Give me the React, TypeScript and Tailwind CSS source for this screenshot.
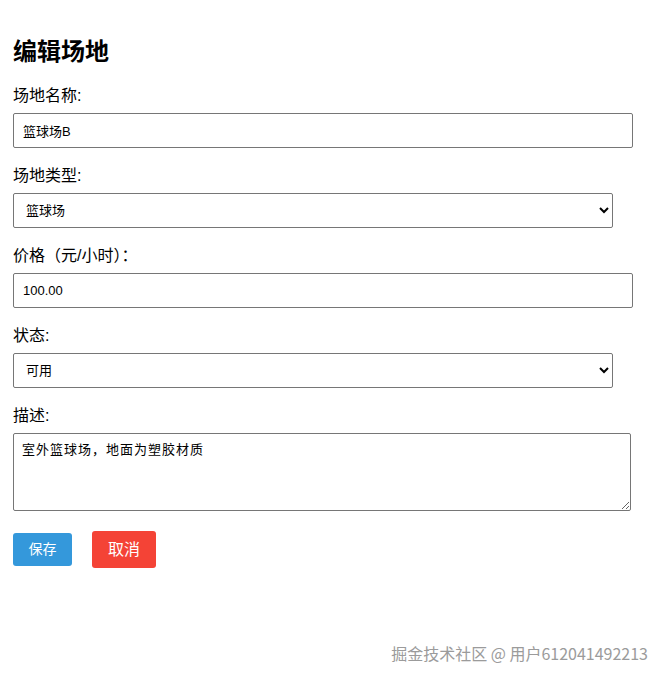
import React from 'react';

const font = { fontFamily: '"Noto Sans CJK SC", "Noto Sans", sans-serif' };

const Label = ({ children }: { children: React.ReactNode }) => (
  <label className="block h-[20px] leading-[20px] text-[16px] text-black mb-[7px]">{children}</label>
);

export default function App() {
  return (
    <div className="relative h-[680px] w-[666px] bg-white font-['Liberation_Sans','Noto_Sans_CJK_SC',sans-serif] text-black">
      <div className="pl-[13px] pt-[36px]">
        <h2 className="text-[24px] font-bold leading-[28px] mb-[22px] font-['Noto_Sans_CJK_SC',sans-serif]">编辑场地</h2>

        <div className="mb-[18px]">
          <Label>场地名称:</Label>
          <input
            defaultValue="篮球场B"
            className="block w-[620px] h-[35px] border border-[#767676] rounded-[2px] px-[9px] text-[13px] outline-none"
          />
        </div>

        <div className="mb-[18px]">
          <Label>场地类型:</Label>
          <select
            defaultValue="篮球场"
            className="block w-[600px] h-[35px] border border-[#767676] rounded-[2px] pl-[8px] text-[13px] bg-white"
          >
            <option>篮球场</option>
            <option>足球场</option>
            <option>羽毛球场</option>
          </select>
        </div>

        <div className="mb-[18px]">
          <Label>价格（元/小时）：</Label>
          <input
            defaultValue="100.00"
            className="block w-[620px] h-[35px] border border-[#767676] rounded-[2px] px-[9px] text-[13px] outline-none"
          />
        </div>

        <div className="mb-[18px]">
          <Label>状态:</Label>
          <select
            defaultValue="可用"
            className="block w-[600px] h-[35px] border border-[#767676] rounded-[2px] pl-[8px] text-[13px] bg-white"
          >
            <option>可用</option>
            <option>维护中</option>
          </select>
        </div>

        <div className="mb-[20px]">
          <Label>描述:</Label>
          <textarea
            defaultValue="室外篮球场，地面为塑胶材质"
            className="block w-[618px] h-[78px] border border-[#767676] rounded-[2px] px-[8px] py-[6px] text-[13px] tracking-[1px] outline-none"
          />
        </div>

        <div className="flex items-center gap-[20px]">
          <button className="w-[59px] h-[33px] bg-[#3498db] text-white text-[14px] rounded-[3px]">保存</button>
          <button className="w-[64px] h-[37px] bg-[#f44336] text-white text-[16px] rounded-[3px]">取消</button>
        </div>
      </div>

      <div
        className="absolute right-[18px] top-[642px] text-[16px] leading-[22px] text-[#9b9b9b] [text-shadow:0_0_2px_#fff]"
        style={font}
      >
        掘金技术社区 @ 用户612041492213
      </div>
    </div>
  );
}
